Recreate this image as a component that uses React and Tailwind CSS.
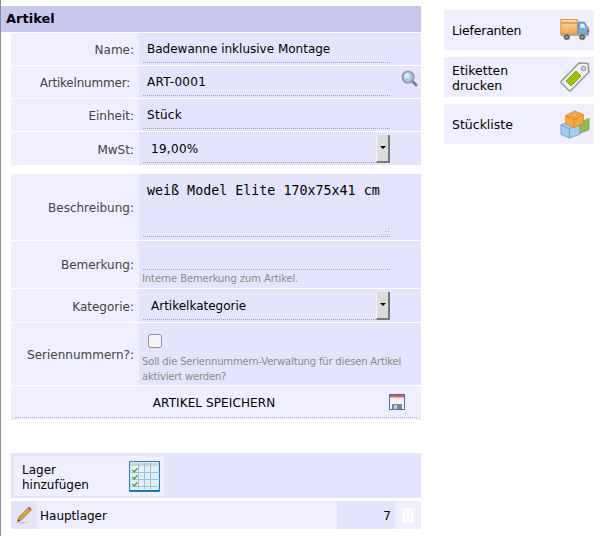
const FONT = "font-['DejaVu_Sans',sans-serif]";

function SearchIcon() {
    return (
        <svg width="17" height="17" viewBox="0 0 18 18">
            <path d="M11.5 11.5 L16 16" stroke="#7a8086" strokeWidth="3" strokeLinecap="round" />
            <circle cx="7.5" cy="7.5" r="6" fill="#a5cbea" stroke="#8a96a0" strokeWidth="1.8" />
            <circle cx="6.5" cy="6" r="2.8" fill="#dcebf8" />
        </svg>
    );
}

function SaveIcon() {
    return (
        <svg width="16" height="16" viewBox="0 0 16 16">
            <rect x="0.5" y="0.5" width="15" height="15" fill="#f4f4f4" stroke="#3f74b0" />
            <rect x="1" y="1" width="14" height="2" fill="#e8584a" />
            <rect x="1" y="3" width="14" height="1" fill="#f6b8b0" />
            <rect x="3" y="10" width="10" height="5" fill="#7b8694" />
            <rect x="5" y="11" width="3" height="4" fill="#c5ccd4" />
        </svg>
    );
}

function GridIcon() {
    return (
        <svg width="31" height="31" viewBox="0 0 31 31">
            <rect x="0.5" y="0.5" width="30" height="30" rx="1" fill="#def2fe" stroke="#1f82c0" strokeWidth="1.2" />
            <rect x="2" y="2" width="27" height="3" fill="#cfd3d6" />
            <path d="M2 11.5H29M2 18.5H29M2 25.5H29M9.5 2V28M15.5 2V28M21.5 2V28" stroke="#a0c0d8" strokeWidth="1" fill="none" />
            <path d="M3.5 9l1.8 1.8 3-3.4M3.5 16l1.8 1.8 3-3.4M3.5 23l1.8 1.8 3-3.4" stroke="#3f8a10" strokeWidth="1.2" fill="none" />
            <path d="M1 29.5H30" stroke="#1870a8" strokeWidth="1" />
        </svg>
    );
}

function PencilIcon() {
    return (
        <svg width="16" height="18" viewBox="0 0 16 18">
            <ellipse cx="6" cy="16.5" rx="6" ry="0.8" fill="#c9c9d8" />
            <path d="M1.5 15.5 L3 11 L12 1.8 L14.8 4.4 L5.6 13.8 Z" fill="#e0a23c" stroke="#9a6a2a" strokeWidth="0.7" />
            <path d="M12 1.8 L13.2 0.8 L15.6 3.2 L14.8 4.4 Z" fill="#d9362f" />
            <path d="M1.5 15.5 L2.2 13.2 L3.8 14.8 Z" fill="#333" />
        </svg>
    );
}

function TrashIcon() {
    return (
        <svg width="14" height="16" viewBox="0 0 14 16">
            <path d="M5 0.5h4v1.5h4.5V3.5H.5V2H5z" fill="#fff" />
            <path d="M1.5 4.5h11v10a1 1 0 0 1-1 1h-9a1 1 0 0 1-1-1z" fill="#fff" />
            <path d="M4.5 7h1.5M8 7h1.5M4.5 10h1.5M8 10h1.5M4.5 13h1.5M8 13h1.5" stroke="#e4e4fd" strokeWidth="1.4" />
        </svg>
    );
}

function GripIcon() {
    return (
        <svg width="10" height="10" viewBox="0 0 10 10">
            <path d="M8 1h1v1H8zM5 4h1v1H5zM8 4h1v1H8zM2 7h1v1H2zM5 7h1v1H5zM8 7h1v1H8z" fill="#a9a9c9" />
        </svg>
    );
}

function TruckIcon() {
    return (
        <svg width="30" height="22" viewBox="0 0 32 24">
            <defs>
                <linearGradient id="box" x1="0" y1="0" x2="0" y2="1">
                    <stop offset="0" stopColor="#fbd9a4" />
                    <stop offset="1" stopColor="#f5a64e" />
                </linearGradient>
            </defs>
            <rect x="0.5" y="0.5" width="18" height="16" fill="url(#box)" stroke="#d98e34" />
            <rect x="1" y="3.5" width="17" height="1.5" fill="#d98e34" />
            <path d="M19.5 3.5h6.5l4.5 6.5v6.5h-11z" fill="#6fb4e8" stroke="#3f7fb5" />
            <path d="M22 5.5h3.5l2.4 4H22z" fill="#e3f2fd" />
            <rect x="29.5" y="12" width="2" height="2.5" fill="#e0342a" />
            <rect x="0.5" y="16.5" width="30.5" height="2" fill="#a8a8a4" />
            <circle cx="7" cy="19.5" r="3.2" fill="#555" stroke="#9a9a96" />
            <circle cx="7" cy="19.5" r="1" fill="#ddd" />
            <circle cx="24" cy="19.5" r="3.2" fill="#555" stroke="#9a9a96" />
            <circle cx="24" cy="19.5" r="1" fill="#ddd" />
        </svg>
    );
}

function TagIcon() {
    return (
        <svg width="30" height="32" viewBox="0 0 30 30">
            <path d="M19 1 L28 1.5 L29 10 L11 28.5 a1.5 1.5 0 0 1-2 0 L1.5 21 a1.5 1.5 0 0 1 0-2 Z" fill="#f2f2f0" stroke="#9a9a98" strokeWidth="1.6" />
            <path d="M16 9 L21 14 L11 24 L6 19 Z" fill="#99c400" stroke="#6f9400" strokeWidth="0.8" />
            <circle cx="23.5" cy="6.5" r="2.2" fill="#d5d5e0" stroke="#909090" />
        </svg>
    );
}

function BlocksIcon() {
    return (
        <svg width="30" height="32" viewBox="0 0 32 32">
            <path d="M21 14 L31 10 L31 22 L21 26 Z" fill="#8cbc52" stroke="#6b9a3a" strokeWidth="0.7" />
            <path d="M1 17 L12 13 L21 17 L21 27 L10 31 L1 27 Z" fill="#9fd0f4" stroke="#5b9ad0" strokeWidth="0.8" />
            <path d="M1 17 L10 21 L21 17 M10 21 V31" stroke="#5b9ad0" strokeWidth="0.8" fill="none" />
            <path d="M6 7 L16 2 L25 6 L25 15 L15 20 L6 16 Z" fill="#f9a83a" stroke="#d08520" strokeWidth="0.8" />
            <path d="M6 7 L15 11 L25 6 M15 11 V20" stroke="#d08520" strokeWidth="0.8" fill="none" />
            <ellipse cx="15" cy="6.5" rx="3" ry="1.5" fill="#fbc070" stroke="#d08520" strokeWidth="0.5" />
        </svg>
    );
}

function Row({ label, labelClass = "pr-[5px] pt-[2px]", className, children }) {
    return (
        <div className={`flex items-stretch ${className}`}>
            <div className={`w-[128px] shrink-0 bg-[#efefff] flex items-center justify-end text-[12px] text-[#444] ${labelClass}`}>
                {label}
            </div>
            <div className="flex-1 relative bg-[#e4e4fd] pl-1">{children}</div>
        </div>
    );
}

function TextValue({ className = "", children }) {
    return (
        <div className={`w-[247px] h-[30px] flex items-center pl-1 pt-[2px] text-[12px] text-black border-b border-dotted border-[#9c9ce0] ${className}`}>
            {children}
        </div>
    );
}

function SelectValue({ className = "", children }) {
    return (
        <div className="w-[247px] h-[31px] flex items-center justify-between pl-2 text-[12px] text-black border-b border-dotted border-[#9c9ce0]">
            <span className={`mt-[3px] ${className}`}>{children}</span>
            <span className="w-[14px] h-[28px] mt-[3px] flex items-center justify-center bg-[#dcdcd8] border-r-2 border-b-2 border-[#777] border-l-[#f4f4f4] border-l">
                <span className="w-0 h-0 border-x-[3px] border-x-transparent border-t-[3px] border-t-black" />
            </span>
        </div>
    );
}

function SideButton({ children, textClass = "", icon }) {
    return (
        <div className="h-10 pl-2 pr-1 flex items-center justify-between bg-[#efefff] text-[12.5px] leading-[15px] text-black">
            <span className={textClass}>{children}</span>
            {icon}
        </div>
    );
}

export default function App() {
    return (
        <div className={`${FONT} w-[601px] h-[536px] overflow-hidden flex bg-white`}>
            <div className="w-px bg-[#8c8c8c] shrink-0" />

            {/* Left column */}
            <div className="w-[420px] shrink-0 pt-[6px]">
                <div className="h-[26px] flex items-center pl-[5px] bg-[#c8c8ee] text-[13px] font-bold text-black">
                    Artikel
                </div>

                <div className="ml-[10px] mt-px flex flex-col gap-px">
                    <Row label="Name:" className="h-[32px]">
                        <TextValue>Badewanne inklusive Montage</TextValue>
                    </Row>
                    <Row label="Artikelnummer:" labelClass="pr-[9px] pt-[2px] tracking-[-0.2px]" className="h-[32px]">
                        <TextValue className="tracking-[0.3px]">ART-0001</TextValue>
                        <span className="absolute right-[3px] top-[4px]"><SearchIcon /></span>
                    </Row>
                    <Row label="Einheit:" className="h-[32px]">
                        <TextValue className="tracking-[0.3px]">Stück</TextValue>
                    </Row>
                    <Row label="MwSt:" className="h-[33px]">
                        <SelectValue className="tracking-[0.3px]">19,00%</SelectValue>
                    </Row>
                </div>

                <div className="ml-[10px] mt-[9px] flex flex-col gap-px">
                    <Row label="Beschreibung:" className="h-[66px]">
                        <textarea
                            readOnly
                            defaultValue="weiß Model Elite 170x75x41 cm"
                            className="block w-[247px] h-[63px] pl-1 pt-[9px] resize-none outline-none bg-transparent font-['DejaVu_Sans_Mono',monospace] text-[13.33px] leading-[16px] text-black border-b border-dotted border-[#9c9ce0]"
                        />
                        <span className="absolute left-[241px] top-[53px]"><GripIcon /></span>
                    </Row>
                    <Row label="Bemerkung:" labelClass="pr-[5px]" className="h-[47px]">
                        <div className="w-[247px] h-[29px] border-b border-dotted border-[#9c9ce0]" />
                        <p className="mt-[2px] -ml-[1px] text-[10px] leading-[14px] tracking-[-0.1px] text-[#8a8a8a]">Interne Bemerkung zum Artikel.</p>
                    </Row>
                    <Row label="Kategorie:" className="h-[33px]">
                        <SelectValue>Artikelkategorie</SelectValue>
                    </Row>
                    <Row label="Seriennummern?:" className="h-[62px]">
                        <div className="ml-[5px] mt-[11px] w-[14px] h-[14px] rounded-[3px] border border-[#8f8f9d] bg-[#f5f5f5]" />
                        <p className="mt-[6px] -ml-[1px] w-[275px] text-[10px] leading-[15px] tracking-[-0.17px] text-[#8a8a8a]">
                            Soll die Seriennummern-Verwaltung für diesen Artikel aktiviert werden?
                        </p>
                    </Row>
                </div>

                <div className="ml-[10px] mt-px h-[34px] pt-px bg-[#efefff]">
                    <div className="relative mx-1 h-[31px] flex items-center justify-center pt-[2px] pr-[4px] text-[12px] tracking-[0.1px] text-black border-b border-dotted border-[#9c9ce0]">
                        ARTIKEL SPEICHERN
                        <span className="absolute left-[374px] top-[7px]"><SaveIcon /></span>
                    </div>
                </div>

                {/* Lager */}
                <div className="ml-[10px] mt-[33px] h-[45px] bg-[#e4e4fd] p-[3px]">
                    <div className="w-[150px] h-10 bg-[#efefff] flex items-center justify-between pl-2 pr-1 text-[12px] leading-[15px] text-black">
                        <span className="pt-[4px]">Lager<br />hinzufügen</span>
                        <GridIcon />
                    </div>
                </div>
                <div className="ml-[10px] mt-[3px] h-[28px] flex bg-[#efefff] text-[12px] text-black">
                    <div className="w-[26px] bg-[#e4e4fd] flex items-center justify-center"><PencilIcon /></div>
                    <div className="flex-1 flex items-center pl-[3px] pt-[2px]">Hauptlager</div>
                    <div className="w-[58px] bg-[#e4e4fd] flex items-center justify-end pr-1 pt-[2px]">7</div>
                    <div className="w-[26px] flex items-center justify-center"><TrashIcon /></div>
                </div>
            </div>

            {/* Right column */}
            <div className="ml-[23px] w-[150px] pt-[10px] flex flex-col gap-[7px]">
                <SideButton textClass="tracking-[-0.2px]" icon={<TruckIcon />}>Lieferanten</SideButton>
                <SideButton textClass="pt-[2px]" icon={<TagIcon />}>Etiketten<br />drucken</SideButton>
                <SideButton icon={<BlocksIcon />}>Stückliste</SideButton>
            </div>
        </div>
    );
}
